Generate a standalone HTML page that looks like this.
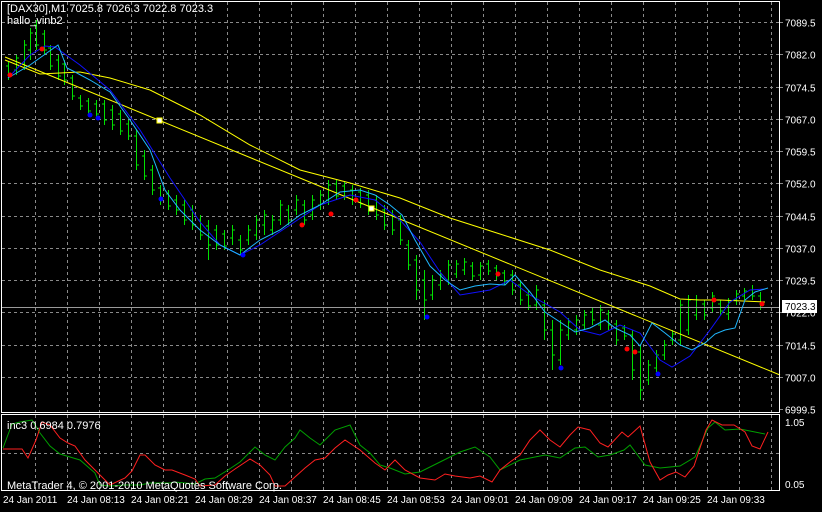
<!DOCTYPE html>
<html><head><meta charset="utf-8"><style>
html,body{margin:0;padding:0;background:#000;width:822px;height:512px;overflow:hidden}
svg{display:block}
text{font-family:"Liberation Sans",sans-serif;font-size:10px;fill:#fff}
</style></head><body>
<svg id="s" width="822" height="512" xmlns="http://www.w3.org/2000/svg">
<rect width="822" height="512" fill="#000"/>
<g id="grid" stroke="#8a8a8a" stroke-dasharray="3,3" stroke-width="1"></g>
<path fill="none" stroke="#00e000" stroke-width="1" d="
M8.5,62V80M6,66H8.5M8.5,76H11
M16.5,55V75M14,70H16.5M16.5,58H19
M24.5,40V70M22,64H24.5M24.5,45H27
M30.5,28V60M28,50H30.5M30.5,33H33
M36.5,20V50M34,25H36.5M36.5,45H39
M44.5,30V55M42,34H44.5M44.5,50H47
M50.5,45V70M48,48H50.5M50.5,66H53
M58.5,55V80M56,60H58.5M58.5,76H61
M64.5,60V85M62,64H64.5M64.5,80H67
M72.5,75V100M70,78H72.5M72.5,96H75
M80.5,95V110M78,98H80.5M80.5,106H83
M88.5,98V115M86,101H88.5M88.5,111H91
M96.5,100V118M94,104H96.5M96.5,114H99
M104.5,100V125M102,104H104.5M104.5,120H107
M112.5,105V130M110,110H112.5M112.5,125H115
M120.5,110V135M118,114H120.5M120.5,131H123
M128.5,120V140M126,124H128.5M128.5,136H131
M136.5,130V170M134,136H136.5M136.5,165H139
M144.5,150V180M142,156H144.5M144.5,176H147
M152.5,165V195M150,170H152.5M152.5,190H155
M160.5,185V205M158,188H160.5M160.5,200H163
M168.5,190V210M166,194H168.5M168.5,206H171
M176.5,195V215M174,200H176.5M176.5,210H179
M184.5,200V225M182,205H184.5M184.5,220H187
M192.5,205V230M190,210H192.5M192.5,225H195
M200.5,215V240M198,220H200.5M200.5,235H203
M208.5,220V260M206,226H208.5M208.5,245H211
M216.5,225V250M214,230H216.5M216.5,245H219
M224.5,230V250M222,234H224.5M224.5,246H227
M232.5,225V245M230,238H232.5M232.5,230H235
M240.5,235V255M238,240H240.5M240.5,250H243
M248.5,225V245M246,240H248.5M248.5,230H251
M256.5,215V240M254,235H256.5M256.5,220H259
M264.5,210V235M262,225H264.5M264.5,215H267
M272.5,215V235M270,230H272.5M272.5,220H275
M280.5,200V225M278,220H280.5M280.5,205H283
M288.5,205V225M286,210H288.5M288.5,220H291
M296.5,195V215M294,210H296.5M296.5,200H299
M304.5,200V225M302,205H304.5M304.5,220H307
M312.5,195V220M310,215H312.5M312.5,200H315
M320.5,190V210M318,205H320.5M320.5,195H323
M328.5,180V205M326,200H328.5M328.5,185H331
M336.5,180V200M334,184H336.5M336.5,196H339
M344.5,182V200M342,186H344.5M344.5,196H347
M352.5,185V205M350,190H352.5M352.5,200H355
M360.5,188V208M358,192H360.5M360.5,204H363
M368.5,190V215M366,195H368.5M368.5,210H371
M376.5,195V220M374,200H376.5M376.5,215H379
M384.5,205V230M382,210H384.5M384.5,225H387
M392.5,210V235M390,215H392.5M392.5,230H395
M400.5,215V245M398,220H400.5M400.5,240H403
M408.5,240V270M406,245H408.5M408.5,265H411
M416.5,255V300M414,260H416.5M416.5,290H419
M424.5,270V320M422,280H424.5M424.5,300H427
M432.5,275V300M430,295H432.5M432.5,280H435
M440.5,270V290M438,285H440.5M440.5,275H443
M448.5,260V285M446,280H448.5M448.5,265H451
M456.5,260V278M454,274H456.5M456.5,264H459
M464.5,258V275M462,270H464.5M464.5,262H467
M472.5,262V280M470,266H472.5M472.5,276H475
M480.5,262V280M478,275H480.5M480.5,266H483
M488.5,260V275M486,264H488.5M488.5,271H491
M496.5,265V280M494,268H496.5M496.5,276H499
M504.5,270V285M502,273H504.5M504.5,281H507
M512.5,270V295M510,275H512.5M512.5,290H515
M520.5,280V305M518,285H520.5M520.5,300H523
M528.5,290V310M526,295H528.5M528.5,306H531
M536.5,285V310M534,305H536.5M536.5,290H539
M544.5,300V340M542,305H544.5M544.5,330H547
M552.5,320V370M550,330H552.5M552.5,355H555
M560.5,320V365M558,360H560.5M560.5,330H563
M568.5,318V340M566,335H568.5M568.5,322H571
M576.5,315V335M574,330H576.5M576.5,320H579
M584.5,310V330M582,325H584.5M584.5,315H587
M592.5,308V325M590,312H592.5M592.5,320H595
M600.5,305V330M598,325H600.5M600.5,310H603
M608.5,310V330M606,314H608.5M608.5,325H611
M616.5,320V345M614,324H616.5M616.5,340H619
M624.5,325V340M622,328H624.5M624.5,336H627
M632.5,330V380M630,335H632.5M632.5,370H635
M640.5,345V400M638,352H640.5M640.5,390H643
M648.5,360V385M646,380H648.5M648.5,365H651
M656.5,350V372M654,368H656.5M656.5,355H659
M664.5,340V360M662,355H664.5M664.5,345H667
M672.5,330V345M670,340H672.5M672.5,334H675
M680.5,300V345M678,340H680.5M680.5,305H683
M688.5,295V335M686,330H688.5M688.5,300H691
M696.5,295V320M694,315H696.5M696.5,300H699
M704.5,300V320M702,304H704.5M704.5,315H707
M712.5,292V312M710,308H712.5M712.5,296H715
M720.5,300V315M718,304H720.5M720.5,311H723
M728.5,298V320M726,314H728.5M728.5,302H731
M736.5,290V305M734,300H736.5M736.5,294H739
M744.5,288V300M742,296H744.5M744.5,291H747
M752.5,285V300M750,290H752.5M752.5,296H755
M760.5,292V310M758,296H760.5M760.5,305H763"/>
<line x1="1" y1="307.5" x2="780" y2="307.5" stroke="#9a9a9a"/>
<polyline fill="none" stroke="#ffff00" stroke-width="1" points="5,60 40,74 80,72 110,78 150,90 200,115 250,145 300,170 350,183 400,198 450,218 500,234 550,250 600,270 650,286 680,299 700,300 720,300 765,302"/>
<line x1="5" y1="57" x2="780" y2="375" stroke="#ffff00"/>
<polyline fill="none" stroke="#1010ff" stroke-width="1" points="8,78 30,55 45,46 55,47 80,65 110,90 140,130 170,178 200,222 220,245 240,255 260,245 290,225 320,205 350,195 375,200 400,220 420,242 440,272 460,295 490,290 510,280 530,295 560,312 580,330 600,335 620,325 640,333 660,360 672,367 690,356 710,330 730,302 750,290 765,289"/>
<polyline id="cyan" fill="none" stroke="#20b8ff" stroke-width="1" points="8,78 30,65 58,45 67,68 75,72 90,80 110,92 130,120 150,150 165,190 180,210 200,230 220,245 240,255 260,240 280,230 300,215 320,205 340,192 360,190 375,195 390,205 402,215 415,240 430,266 445,280 460,290 475,286 490,284 505,285 515,275 530,292 545,312 560,322 575,332 590,328 605,320 615,328 630,335 640,346 652,323 665,333 680,345 692,350 705,343 715,334 725,330 735,328 745,300 755,292 768,288"/>
<g fill="#ff0000"><circle cx="10" cy="75" r="2.5"/><circle cx="42" cy="49" r="2.5"/><circle cx="302" cy="225" r="2.5"/><circle cx="331" cy="214" r="2.5"/><circle cx="356" cy="200" r="2.5"/><circle cx="498" cy="274" r="2.5"/><circle cx="627" cy="349" r="2.5"/><circle cx="635" cy="352" r="2.5"/><circle cx="714" cy="300" r="2.5"/><circle cx="762" cy="304" r="2.5"/></g>
<g fill="#0000ff"><circle cx="90" cy="115" r="2.5"/><circle cx="98" cy="118" r="2.5"/><circle cx="161" cy="199" r="2.5"/><circle cx="243" cy="255" r="2.5"/><circle cx="427" cy="317" r="2.5"/><circle cx="561" cy="368" r="2.5"/><circle cx="658" cy="374" r="2.5"/></g>
<rect x="157" y="118" width="5" height="5" fill="#fff" stroke="#ff0" />
<rect x="369" y="206" width="5" height="5" fill="#fff" stroke="#ff0" />
<rect x="1.5" y="1.5" width="778" height="411" fill="none" stroke="#fff"/>
<rect x="1.5" y="414.5" width="778" height="76" fill="none" stroke="#fff"/>
<polyline fill="none" stroke="#00a000" points="3,448 12,424 20,422 32,420 40,433 50,446 60,454 70,457 80,460 95,473 100,485 110,486 125,485 140,485 150,483 170,483 175,482 195,484 205,479 215,478 228,470 240,462 255,447 265,455 275,460 285,447 295,438 300,430 310,438 320,445 335,430 350,425 360,445 370,453 380,465 390,468 405,474 420,472 440,462 460,452 475,447 490,457 500,470 520,460 530,458 545,455 560,458 575,448 585,447 598,457 610,455 624,450 630,445 645,465 660,468 680,466 695,457 708,428 715,422 725,430 740,429 755,432 765,434"/>
<polyline fill="none" stroke="#ff2020" points="3,449 12,449 22,449 28,458 36,440 42,422 50,425 60,438 68,443 75,446 85,460 95,470 100,475 110,485 125,478 132,471 140,455 145,455 155,465 165,470 172,470 185,475 195,479 200,486 215,485 225,476 235,469 250,459 260,465 270,475 275,486 285,486 295,477 305,468 315,460 325,458 335,448 345,440 360,450 375,463 385,470 395,460 405,470 420,478 435,480 445,474 455,476 470,478 480,476 492,482 500,470 510,462 520,455 530,440 540,430 550,440 560,447 570,435 578,427 590,430 600,443 608,447 622,432 628,437 640,426 650,462 660,480 668,475 676,472 685,477 694,466 706,430 712,420 722,425 734,425 745,432 752,446 760,449 768,432"/>
<text x="7" y="12" style="font-size:11px">[DAX30],M1  7025.8 7026.3 7022.8 7023.3</text>
<text x="7" y="24" style="font-size:11px">hallo_vinb2</text>
<text x="7" y="429" style="font-size:11px">inc3 0.6984 0.7976</text>
<text x="7" y="489" style="font-size:11px">MetaTrader 4, © 2001-2010 MetaQuotes Software Corp.</text>
<g id="yl"></g>
<rect x="782" y="300" width="35" height="13" fill="#fff"/>
<text x="785" y="310" style="fill:#000">7023.3</text>
<text x="785" y="426">1.05</text>
<text x="785" y="488">0.05</text>
<g id="xl"></g>
</svg>
<script>
var NS="http://www.w3.org/2000/svg";
function el(p,t,a,txt){var e=document.createElementNS(NS,t);for(var k in a)e.setAttribute(k,a[k]);if(txt)e.textContent=txt;document.getElementById(p).appendChild(e);}
for(var k=1;k<25;k++){var x=3.5+32*k;el('grid','line',{x1:x,y1:2,x2:x,y2:412});el('grid','line',{x1:x,y1:415,x2:x,y2:490});}
var labs=["7089.5","7082.0","7074.5","7067.0","7059.5","7052.0","7044.5","7037.0","7029.5","7022.0","7014.5","7007.0","6999.5"];
for(var i=0;i<13;i++){var y=Math.round(22+i*32.25)+0.5;if(i<12)el('grid','line',{x1:2,y1:y,x2:779,y2:y});el('grid','line',{x1:780,y1:y,x2:783,y2:y});el('yl','text',{x:785,y:y+4},labs[i]);}
el('grid','line',{x1:2,y1:453.5,x2:779,y2:453.5});
var tl=["24 Jan 2011","24 Jan 08:13","24 Jan 08:21","24 Jan 08:29","24 Jan 08:37","24 Jan 08:45","24 Jan 08:53","24 Jan 09:01","24 Jan 09:09","24 Jan 09:17","24 Jan 09:25","24 Jan 09:33"];
for(var i=0;i<12;i++){el('xl','text',{x:3+64*i,y:503},tl[i]);}
</script>
</body></html>
